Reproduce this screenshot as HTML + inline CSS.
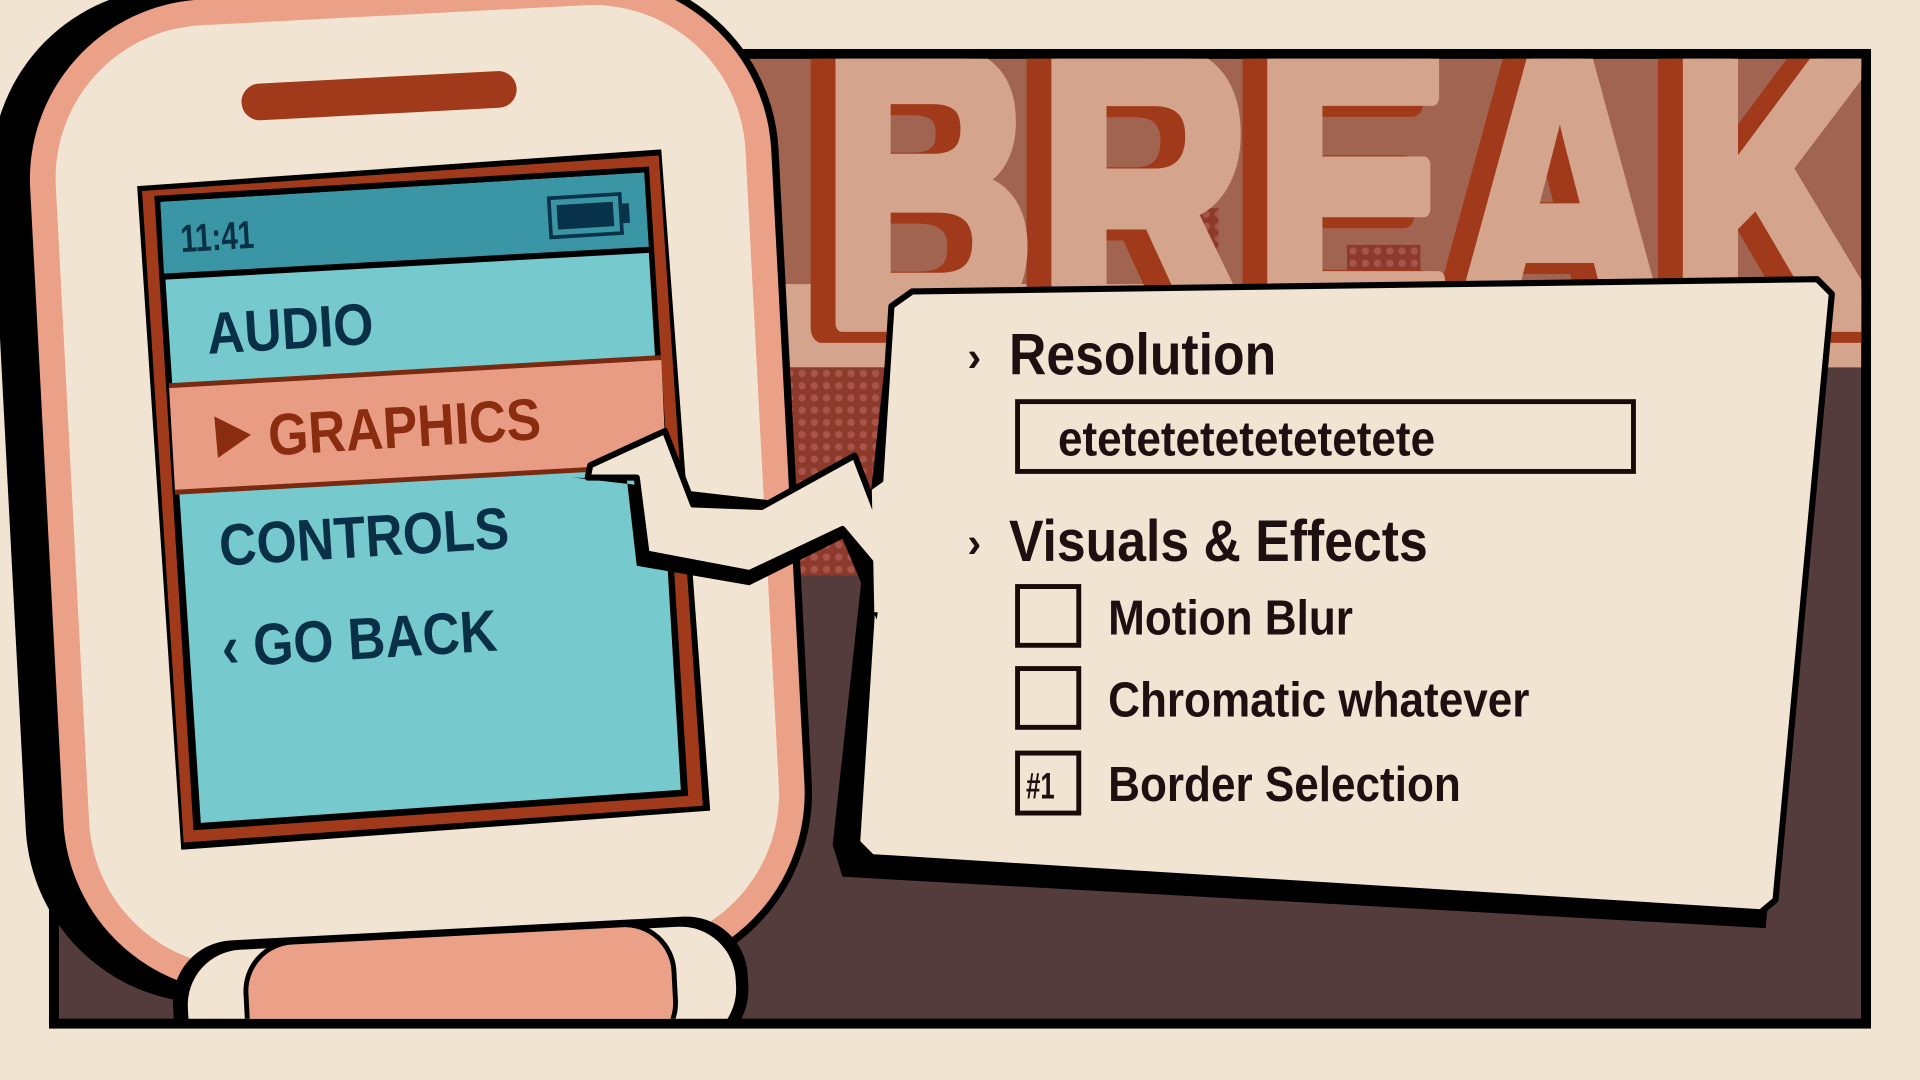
<!DOCTYPE html>
<html><head><meta charset="utf-8"><style>
html,body{margin:0;padding:0;background:#f2e4d2;overflow:hidden;width:1920px;height:1080px}
svg{display:block;position:absolute;left:0;top:0}
</style></head><body>
<svg width="1920" height="1080" viewBox="0 0 1568 882" xmlns="http://www.w3.org/2000/svg" font-family="Liberation Sans, sans-serif">
<defs>
<clipPath id="inner"><rect x="48" y="48" width="1472" height="784"/></clipPath>
<clipPath id="phoneclip"><rect x="0" y="0" width="1568" height="832"/></clipPath>
<pattern id="brick" width="10" height="10" patternUnits="userSpaceOnUse"><rect width="10" height="10" fill="#8c3a2c"/><circle cx="5" cy="5" r="3" fill="#a9544a"/></pattern>
</defs>
<rect width="1568" height="882" fill="#f2e4d2"/>
<rect x="40" y="40" width="1488" height="800" fill="#000"/>
<g clip-path="url(#inner)">
<rect x="48" y="48" width="1472" height="784" fill="#553c3c"/>
<rect x="600" y="48" width="920" height="252" fill="#a06450"/>
<rect x="600" y="232" width="920" height="68" fill="#d4a48c"/>
<rect x="620" y="300" width="120" height="170" fill="url(#brick)"/>
<rect x="975" y="170" width="20" height="70" fill="url(#brick)"/>
<rect x="1100" y="200" width="60" height="35" fill="url(#brick)"/>
<g transform="translate(655,268) scale(0.75,1)" font-weight="bold" font-size="320">
<text x="0" y="0" fill="#a03a1a" letter-spacing="4" stroke="#a03a1a" stroke-width="24" stroke-linejoin="round">BREAK</text>
<text x="22" y="-4" fill="#d4a48c" letter-spacing="4" stroke="#d4a48c" stroke-width="14" stroke-linejoin="round">BREAK</text>
</g>
</g>
<polygon points="728,248 1488,236 1442,758 688,716 680,690" fill="#000"/>
<polygon points="745,238 1484,228 1496,240 1450,735 1438,745 712,700 700,688 728,250" fill="#f2e4d2" stroke="#000" stroke-width="5" stroke-linejoin="round"/>
<g clip-path="url(#phoneclip)">
<g transform="rotate(-3 340 420)">
<rect x="8" y="-20" width="620" height="830" rx="150" fill="#000"/>
<rect x="36" y="-12" width="612" height="818" rx="150" fill="#eba088" stroke="#000" stroke-width="6"/>
<rect x="60" y="12" width="564" height="770" rx="125" fill="#f2e4d2"/>
<rect x="215" y="62" width="225" height="30" rx="15" fill="#a03a1a"/>
</g>
<g transform="rotate(-3 380 790)">
<rect x="140" y="758" width="470" height="110" rx="50" fill="#000"/>
<rect x="152" y="766" width="448" height="96" rx="45" fill="#f2e4d2"/>
<rect x="200" y="762" width="350" height="104" rx="40" fill="#eba088" stroke="#000" stroke-width="4"/>
</g>
</g>
<polygon points="112,152 540,122 580,662 148,694" fill="#000"/>
<polygon points="116,156 538,127 574,658 150,688" fill="#a03a1a"/>
<polygon points="126,160 530,136 562,650 158,678" fill="#000"/>
<polygon points="131,165 526,141 556,645 164,672" fill="#76c9cd"/>
<polygon points="131,165 526,141 530,204 134,226" fill="#3a96a5"/>
<line x1="133" y1="226" x2="530" y2="204" stroke="#000" stroke-width="5"/>
<polygon points="138,315 540,292 544,380 143,402" fill="#e99c84"/>
<line x1="138" y1="315" x2="540" y2="292" stroke="#7a2a10" stroke-width="4"/>
<line x1="143" y1="402" x2="544" y2="380" stroke="#7a2a10" stroke-width="4"/>
<g transform="rotate(-3.5 480 175)">
<rect x="449" y="160" width="58" height="32" fill="none" stroke="#07324a" stroke-width="3"/>
<rect x="455" y="166" width="46" height="20" fill="#07324a"/>
<rect x="508" y="168" width="6" height="16" fill="#07324a"/>
</g>
<g font-weight="bold" fill="#0a3048">
<text transform="translate(148,206) rotate(-3.5) scale(0.75,1)" font-size="32">11:41</text>
<text transform="translate(170,289) rotate(-3.5) scale(0.88,1)" font-size="48">AUDIO</text>
<text transform="translate(180,462) rotate(-3.5) scale(0.88,1)" font-size="48">CONTROLS</text>
<text transform="translate(182,545) rotate(-3.5) scale(0.88,1)" font-size="48">‹ GO BACK</text>
</g>
<polygon points="175,340 205,355 178,374" fill="#8a2c10"/>
<text transform="translate(220,372) rotate(-3.5) scale(0.88,1)" font-size="48" font-weight="bold" fill="#8a2c10">GRAPHICS</text>
<polygon points="468,390 512,392 520,462 612,478 688,440 716,506 728,420" fill="#000"/>
<polygon points="482,380 543,352 566,412 622,414 698,372 724,440 720,470 688,432 612,468 528,452 520,390 480,390" fill="#f2e4d2" stroke="#000" stroke-width="5" stroke-linejoin="round"/>
<polygon points="712,400 740,380 736,500 714,500" fill="#f2e4d2"/>
<g fill="#1e1010" font-weight="bold">
<text x="790" y="303" font-size="34">›</text>
<text transform="translate(824,306) scale(0.88,1)" font-size="48">Resolution</text>
<rect x="831" y="328" width="503" height="57" fill="none" stroke="#1a0a0a" stroke-width="4"/>
<text transform="translate(864,372) scale(0.9,1)" font-size="40">etetetetetetetetete</text>
<text x="790" y="455" font-size="34">›</text>
<text transform="translate(824,458) scale(0.88,1)" font-size="48">Visuals &amp; Effects</text>
<rect x="831" y="479" width="50" height="48" fill="none" stroke="#1a0a0a" stroke-width="4"/>
<rect x="831" y="546" width="50" height="48" fill="none" stroke="#1a0a0a" stroke-width="4"/>
<rect x="831" y="615" width="50" height="49" fill="none" stroke="#1a0a0a" stroke-width="4"/>
<text transform="translate(838,652) scale(0.7,1)" font-size="30">#1</text>
<text transform="translate(905,518) scale(0.9,1)" font-size="40">Motion Blur</text>
<text transform="translate(905,585) scale(0.9,1)" font-size="40">Chromatic whatever</text>
<text transform="translate(905,654) scale(0.9,1)" font-size="40">Border Selection</text>
</g>
</svg>
</body></html>
